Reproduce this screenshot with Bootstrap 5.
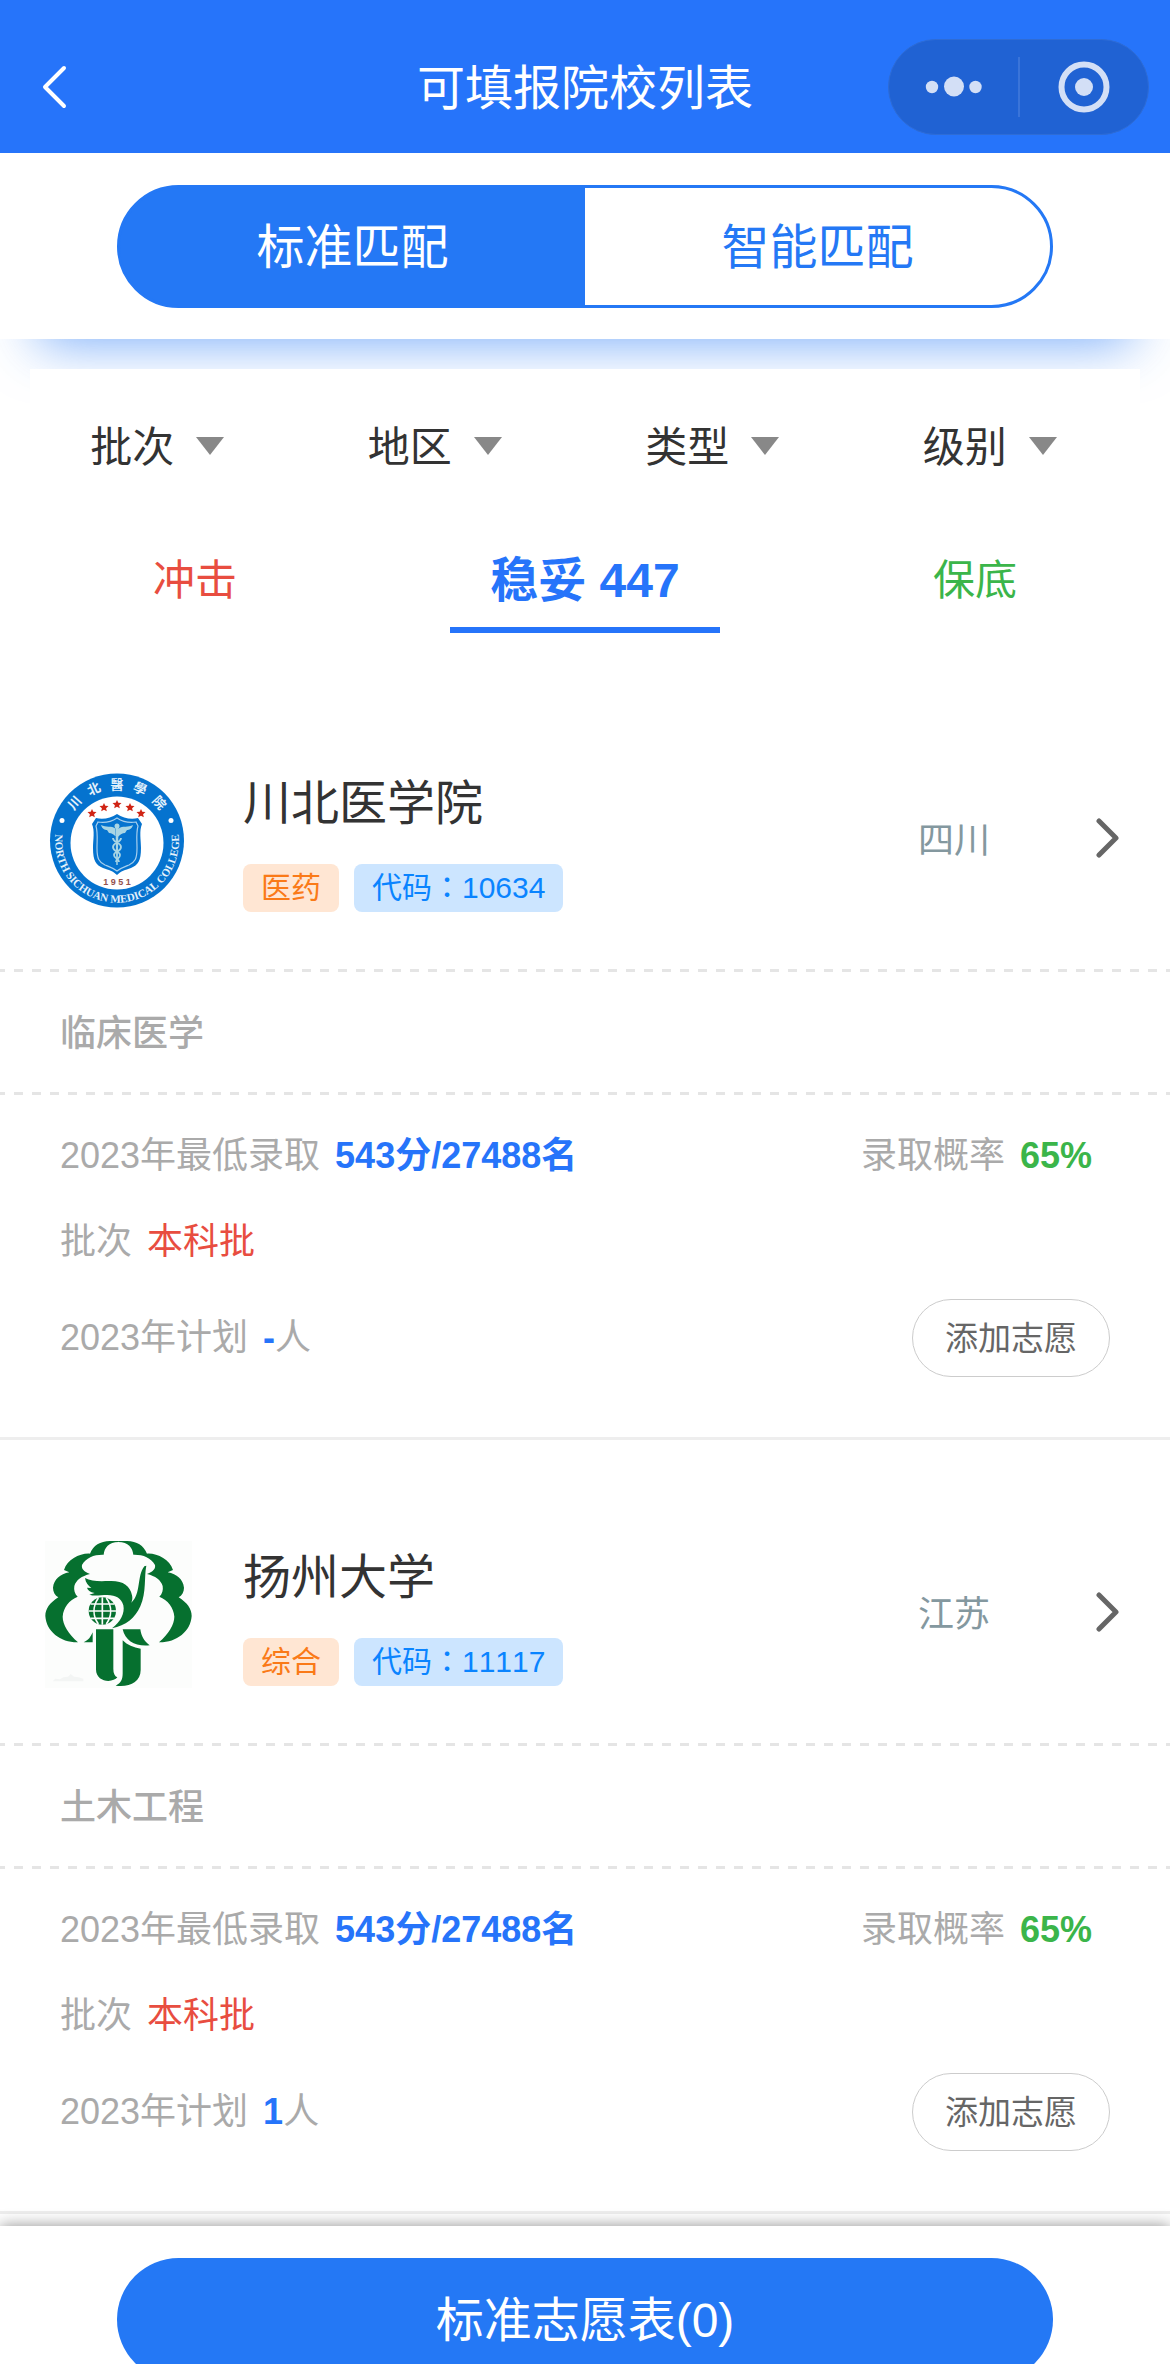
<!DOCTYPE html>
<html lang="zh-CN">
<head>
<meta charset="utf-8">
<meta name="viewport" content="width=device-width, initial-scale=1">
<title>可填报院校列表</title>
<link rel="stylesheet" href="https://cdn.jsdelivr.net/npm/bootstrap@5.3.0/dist/css/bootstrap.min.css">
<style>
:root { --brand: #2674fa; --brand-btn: #2478f5; --ok: #3bb54a; --hot: #e84d40; --dim: #aaa; }
body { font-family: "Liberation Sans", "Noto Sans CJK SC", sans-serif; font-kerning: none; color: #333; background: #fff; }
button { border: 0; background: none; padding: 0; }
.app-shell { height: 100vh; overflow: hidden; }
.app-header { display: grid; grid-template-columns: 1fr auto 1fr; align-items: center; background: var(--brand); padding: 39px 21px 18px; }
.btn-back { margin-left: 21px; }
.app-title { font-size: 48px; line-height: 72px; padding-top: 3px; color: #fff; font-weight: 400; }
.capsule { width: 261px; height: 96px; border-radius: 48px; background: #2062d3; border: 1px solid #2e6cd6; }
.capsule button { flex: 1 1 0; height: 94px; }
.capsule-line { width: 2px; height: 60px; background: #3a74d9; }
.match-bar { padding: 32px 10% 31px; position: relative; background: #fff; box-shadow: 0 42px 54px -38px rgba(36,120,246,.62); }
.match-tabs { border: 3px solid var(--brand-btn); border-radius: 62px; background: linear-gradient(90deg, var(--brand-btn) 50%, #fff 50%); }
.match-tabs button { flex: 1 1 0; height: 117px; padding-top: 3px; font-size: 48px; line-height: 72px; color: var(--brand-btn); }
.match-tabs button.active { color: #fff; }
.filters { margin: 30px 30px 0; padding-top: 47px; position: relative; background: #fff; }
.filters > div { flex: 1 1 0; }
.filters select { appearance: none; border: 0; color: #333; font-size: 42px; line-height: 60px; height: 60px; padding: 2px 72px 0 0;
  background: url("data:image/svg+xml,%3Csvg xmlns='http://www.w3.org/2000/svg' viewBox='0 0 28 18'%3E%3Cpath d='M0 0h28L14 18z' fill='%23888'/%3E%3C/svg%3E") no-repeat right 23px center / 28px 18px; }
.levels { padding: 75px 0 33px; }
.levels > div { flex: 1 1 0; }
.levels button { width: 270px; font-size: 42px; line-height: 60px; padding-bottom: 16px; border-bottom: 6px solid transparent; }
.levels button.active { font-size: 48px; font-weight: 700; color: var(--brand); border-color: var(--brand); }
.level-rush { color: var(--hot); }
.level-safe { color: var(--ok); }
.school { border-bottom: 3px solid #eee; }
.school-head { padding: 101px 51px 55px 45px; color: inherit; }
.school-logo { width: 147px; height: 147px; flex: none; }
.school-info { margin-left: 51px; gap: 30px; padding-bottom: 2px; }
.school-name { font-size: 48px; line-height: 60px; font-weight: 400; }
.chips { gap: 15px; }
.chip { font-size: 30px; line-height: 48px; height: 48px; padding: 0 18px; border-radius: 8px; }
.chip-type { background: #ffe6d3; color: #fa7a18; }
.chip-code { background: #cce5ff; color: #0a84ff; }
.colon { font-family: "Noto Sans CJK TC", sans-serif; line-height: 1; }
.province { font-size: 36px; line-height: 54px; color: #84989f; margin-right: 105px; }
.arrow { margin-bottom: 6px; }
.dash-line { height: 3px; background: repeating-linear-gradient(90deg, #e5e5e5 0 5px, #fff 5px 14px, #e5e5e5 14px 18px); }
.major-name { font-size: 36px; line-height: 116px; padding: 4px 60px 0; font-weight: 500; color: var(--dim); }
.facts { padding: 34px 60px 60px; gap: 30px; font-size: 36px; line-height: 54px; color: var(--dim); }
.facts b { margin-left: 15px; color: var(--brand); }
.chance { margin-right: 18px; }
.facts .chance b { color: var(--ok); }
.batch-row { margin-top: 2px; }
.batch { margin-left: 15px; color: var(--hot); }
.btn-add { width: 198px; height: 78px; padding-top: 2px; border: 1px solid #ccc; border-radius: 39px; font-size: 33px; line-height: 48px; color: #666; }
.app-footer { position: relative; background: #fff; padding: 32px 10% 31px; margin-top: 12px; box-shadow: 0 0 15px rgba(0,0,0,.44); }
.btn-form { height: 123px; padding-top: 3px; border-radius: 62px; background: var(--brand-btn); color: #fff; font-size: 48px; line-height: 72px; }
</style>
<script src="https://cdn.jsdelivr.net/npm/bootstrap@5.3.0/dist/js/bootstrap.bundle.min.js"></script>
</head>
<body>
<div class="app-shell d-flex flex-column">
  <header class="app-header flex-shrink-0">
    <div class="d-flex">
      <button type="button" class="btn-back" aria-label="返回">
        <svg class="d-block" width="26" height="44" viewBox="0 0 26 44" fill="none" stroke="#fff" stroke-width="4" stroke-linecap="round" stroke-linejoin="round"><path d="M22 3 3 22l19 19"/></svg>
      </button>
    </div>
    <h1 class="app-title m-0">可填报院校列表</h1>
    <div class="capsule d-flex align-items-center ms-auto">
      <button type="button" class="d-flex align-items-center justify-content-center" aria-label="更多">
        <svg width="58" height="22" viewBox="0 0 58 22" fill="#d3dff6"><circle cx="8" cy="11" r="6.200"/><circle cx="30" cy="10.500" r="10"/><circle cx="51.500" cy="11" r="6.200"/></svg>
      </button>
      <span class="capsule-line"></span>
      <button type="button" class="d-flex align-items-center justify-content-center" aria-label="关闭">
        <svg width="52" height="52" viewBox="0 0 52 52"><circle cx="26" cy="26" r="22.500" fill="none" stroke="#d3dff6" stroke-width="6"/><circle cx="26" cy="26" r="9" fill="#d3dff6"/></svg>
      </button>
    </div>
  </header>

  <section class="match-bar flex-shrink-0">
    <div class="match-tabs d-flex">
      <button type="button" class="active">标准匹配</button>
      <button type="button">智能匹配</button>
    </div>
  </section>

  <section class="filters d-flex flex-shrink-0">
    <div class="text-center"><select aria-label="批次"><option>批次</option></select></div>
    <div class="text-center"><select aria-label="地区"><option>地区</option></select></div>
    <div class="text-center"><select aria-label="类型"><option>类型</option></select></div>
    <div class="text-center"><select aria-label="级别"><option>级别</option></select></div>
  </section>

  <nav class="levels d-flex flex-shrink-0">
    <div class="text-center"><button type="button" class="level-rush">冲击</button></div>
    <div class="text-center"><button type="button" class="active">稳妥 447</button></div>
    <div class="text-center"><button type="button" class="level-safe">保底</button></div>
  </nav>

  <main class="flex-shrink-0">
    <article class="school">
      <a href="#" class="school-head d-flex align-items-center text-decoration-none">
        <svg class="school-logo" viewBox="0 0 147 147" role="img" aria-label="川北医学院校徽">
          <defs>
            <path id="arcTop" d="M20 73.500a52 52 0 0 1 104 0"/>
            <path id="arcBottom" d="M12 58A62 62 0 1 0 132 58"/>
          </defs>
          <circle cx="72" cy="73.500" r="67" fill="#0573cf"/>
          <circle cx="72" cy="76" r="46.500" fill="#fff"/>
          <text font-family="Noto Sans CJK SC" font-size="13" font-weight="700" fill="#e4f1fb" text-anchor="middle"><textPath href="#arcTop" startOffset="50%">川&#160;&#160;&#160;北&#160;&#160;&#160;醫&#160;&#160;&#160;學&#160;&#160;&#160;院</textPath></text>
          <text font-family="Liberation Serif" font-size="11" font-weight="700" fill="#e4f1fb" text-anchor="middle"><textPath href="#arcBottom" startOffset="50%">NORTH SICHUAN MEDICAL COLLEGE</textPath></text>
          <circle cx="17" cy="53.500" r="2.500" fill="#fff"/><circle cx="126" cy="53.500" r="2.500" fill="#fff"/>
          <g fill="#d02414">
            <path id="st" d="M72 33l1.300 2.800 3.200.3-2.400 2.100.7 3.100-2.800-1.600-2.800 1.600.7-3.100-2.400-2.100 3.200-.3z"/>
            <use href="#st" x="-13" y="3"/><use href="#st" x="13" y="3"/><use href="#st" x="-25" y="9"/><use href="#st" x="24" y="9"/>
          </g>
          <path d="M72 47c6 4 14 6 21 4l4 6c-3 7-1 16-1 24 0 13-3 17-10 20-6 2-10 3-14 7-4-4-8-5-14-7-7-3-10-7-10-20 0-8 2-17-1-24l4-6c7 2 15 0 21-4z" fill="#0573cf"/>
          <path d="M72 51c6 4 13 5 19 4l2 4c-2 7-1 14-1 22 0 11-2 14-8 17-5 2-8 3-12 6-4-3-7-4-12-6-6-3-8-6-8-17 0-8 1-15-1-22l2-4c6 1 13 0 19-4z" fill="none" stroke="#a7cfee" stroke-width="1.200"/>
          <path d="M70.500 60h3l-.8 38h-1.400zM71 62c-5-4-10-1-15-4 1 4 4 5 6 5l2 3c3 0 4 1 7 4zM73 62c5-4 10-1 15-4-1 4-4 5-6 5l-2 3c-3 0-4 1-7 4z" fill="#a9d5e4"/>
          <circle cx="72" cy="59" r="2.500" fill="#a9d5e4"/>
          <path d="M68 71c0 5 8 4 8 9s-7 4-7 8 5 3 5 7M76 71c0 5-8 4-8 9s7 4 7 8-4 3-4 7" fill="none" stroke="#a9d5e4" stroke-width="1.800"/>
          <text x="72" y="118" text-anchor="middle" font-family="Liberation Sans" font-size="9" font-weight="700" fill="#94524d">1 9 5 1</text>
        </svg>
        <div class="school-info d-flex flex-column align-self-end">
          <h2 class="school-name m-0">川北医学院</h2>
          <div class="chips d-flex"><span class="chip chip-type">医药</span><span class="chip chip-code">代码<span class="colon" lang="zh-TW">：</span>10634</span></div>
        </div>
        <span class="province ms-auto">四川</span>
        <svg class="arrow" width="24" height="42" viewBox="0 0 24 42" fill="none" stroke="#666" stroke-width="5" stroke-linecap="round" stroke-linejoin="round"><path d="M4 4l17 17L4 38"/></svg>
      </a>
      <div class="dash-line"></div>
      <h3 class="major-name m-0">临床医学</h3>
      <div class="dash-line"></div>
      <div class="facts d-flex flex-column">
        <div class="d-flex justify-content-between"><span>2023年最低录取<b>543分/27488名</b></span><span class="chance">录取概率<b>65%</b></span></div>
        <div class="batch-row">批次<span class="batch">本科批</span></div>
        <div class="d-flex justify-content-between align-items-center"><span>2023年计划<b>-</b>人</span><button type="button" class="btn-add">添加志愿</button></div>
      </div>
    </article>

    <article class="school">
      <a href="#" class="school-head d-flex align-items-center text-decoration-none">
        <svg class="school-logo" viewBox="45 63 441 441" role="img" aria-label="扬州大学校徽">
          <path d="M45 63h441v441H45z" fill="#fcfdfc"/>
          <g fill="#06702f">
            <path id="crown" d="M266 63h-26C210 64 190 76 180 101 150 99 112 118 102 150L118 157C90 162 72 178 69 203 69 216 75 226 85 232 60 248 46 266 46 288 49 335 92 368 144 367 116 342 98 314 98 290 100 262 118 240 143 230 134 222 131 210 133 198 138 180 155 168 180 162 160 154 154 146 156 135 168 112 194 103 221 104 223 84 236 66 266 66z"/>
            <use href="#crown" transform="matrix(-1 0 0 1 531 0)"/>
            <path d="M165 174C183 184 205 184 237 183 278 181 300 196 306 226 308 234 307 241 304 248 334 222 320 168 343 139L349 137C342 168 350 216 331 259 315 294 288 317 246 325 272 305 285 280 280 256 274 234 258 226 232 225 210 225 194 229 178 224L194 219C180 216 173 210 171 203L184 204C174 197 167 188 165 174z"/>
            <circle cx="217" cy="273" r="41"/>
            <path d="M161 367c16-7 20-16 27-30v30z"/>
            <path d="M198 328h52v118c0 14 4 22 12 26-12 17-64 17-64-24z"/>
            <path d="M278 328h53c3 20 10 34 28 48-42 4-73-12-81-48z"/>
            <path d="M278 361c14 14 32 22 54 25v64c0 36-35 53-75 47 16-8 21-18 21-37z"/>
          </g>
          <g fill="none" stroke="#fcfdfc" stroke-width="5"><path d="M217 232v82M176 273h82M182 252h70M182 295h70"/><path d="M205 234c-17 25-17 54 0 78M229 234c17 25 17 54 0 78"/></g>
          <path d="M68 484l8-8 14 2 10-6 14-2 8-8 10 8 14 2 14 4v8z" fill="#f3f5f4"/>
        </svg>
        <div class="school-info d-flex flex-column align-self-end">
          <h2 class="school-name m-0">扬州大学</h2>
          <div class="chips d-flex"><span class="chip chip-type">综合</span><span class="chip chip-code">代码<span class="colon" lang="zh-TW">：</span>11117</span></div>
        </div>
        <span class="province ms-auto">江苏</span>
        <svg class="arrow" width="24" height="42" viewBox="0 0 24 42" fill="none" stroke="#666" stroke-width="5" stroke-linecap="round" stroke-linejoin="round"><path d="M4 4l17 17L4 38"/></svg>
      </a>
      <div class="dash-line"></div>
      <h3 class="major-name m-0">土木工程</h3>
      <div class="dash-line"></div>
      <div class="facts d-flex flex-column">
        <div class="d-flex justify-content-between"><span>2023年最低录取<b>543分/27488名</b></span><span class="chance">录取概率<b>65%</b></span></div>
        <div class="batch-row">批次<span class="batch">本科批</span></div>
        <div class="d-flex justify-content-between align-items-center"><span>2023年计划<b>1</b>人</span><button type="button" class="btn-add">添加志愿</button></div>
      </div>
    </article>
  </main>

  <footer class="app-footer flex-shrink-0">
    <button type="button" class="btn-form w-100">标准志愿表(0)</button>
  </footer>
</div>
</body>
</html>
